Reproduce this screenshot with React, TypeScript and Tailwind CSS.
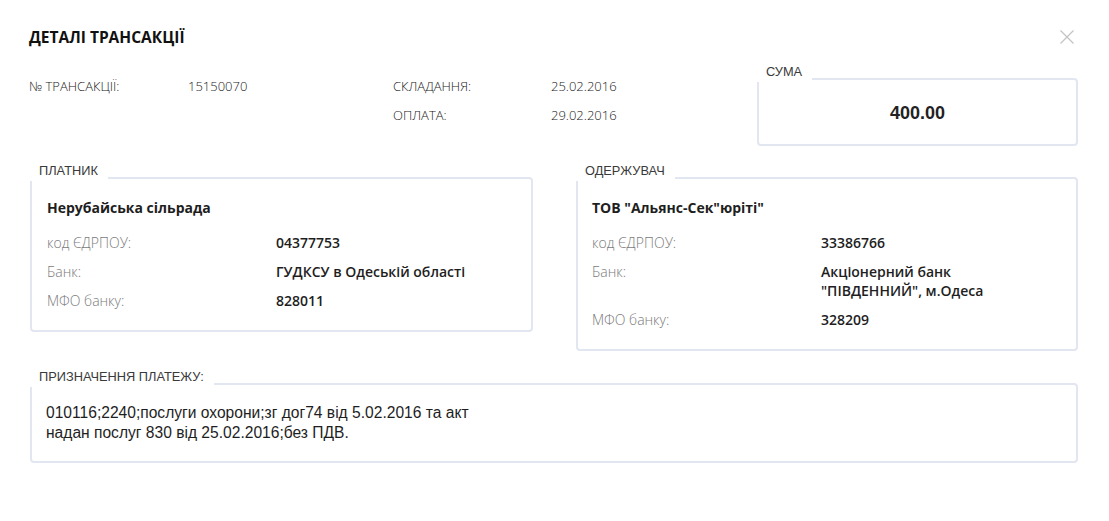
import React from "react";

const open = { fontFamily: '"Open Sans", "Noto Sans", sans-serif' };
const arial = { fontFamily: '"Liberation Sans", Arial, sans-serif' };

function Legend({ children }: { children: React.ReactNode }) {
  return (
    <div
      className="absolute left-[-8px] top-[-18px] bg-white pl-[15px] pr-[10px] text-[12.8px] leading-[20px] text-[#3a3a3a]"
      style={arial}
    >
      {children}
    </div>
  );
}

function Row({ label, value, valueCol }: { label: string; value: React.ReactNode; valueCol: string }) {
  return (
    <div className="flex py-[5px] text-[14px] leading-[19px]">
      <div className={`${valueCol} shrink-0 font-light text-[#7a7a7a]`}>{label}</div>
      <div className="font-semibold text-[#1e1e1e]">{value}</div>
    </div>
  );
}

function Party({
  legend,
  name,
  code,
  bank,
  mfo,
  valueCol,
  pl,
}: {
  legend: string;
  name: string;
  code: string;
  bank: React.ReactNode;
  mfo: string;
  valueCol: string;
  pl: string;
}) {
  return (
    <div className={`relative rounded-[4px] border-2 border-[#e1e6f0] ${pl} pt-[19px] pb-[15px]`} style={open}>
      <Legend>{legend}</Legend>
      <div className="text-[14px] font-bold leading-[20px] text-[#1e1e1e]">{name}</div>
      <div className="mt-[10px]">
        <Row label="код ЄДРПОУ:" value={code} valueCol={valueCol} />
        <Row label="Банк:" value={bank} valueCol={valueCol} />
        <Row label="МФО банку:" value={mfo} valueCol={valueCol} />
      </div>
    </div>
  );
}

export default function App() {
  return (
    <div className="min-h-[521px] w-[1109px] bg-white pl-[30px] pr-[31px]" style={open}>
      <div className="flex items-center justify-between pt-[27px]">
        <h1 className="ml-[-1px] text-[15.5px] font-bold leading-[20px] text-[#111]">ДЕТАЛІ ТРАНСАКЦІЇ</h1>
        <svg width="16" height="16" viewBox="0 0 16 16" className="mr-[3px]">
          <line x1="1.5" y1="1.5" x2="14.5" y2="14.5" stroke="#c4c4c4" strokeWidth="1.3" />
          <line x1="14.5" y1="1.5" x2="1.5" y2="14.5" stroke="#c4c4c4" strokeWidth="1.3" />
        </svg>
      </div>

      <div className="mt-[25px] flex items-start">
        <div className="w-[363px] text-[13px] font-light leading-[29px] text-[#1a1a1a]">
          <div className="flex">
            <div className="ml-[-1px] w-[159px] shrink-0">№ ТРАНСАКЦІЇ:</div>
            <div>15150070</div>
          </div>
        </div>
        <div className="text-[13px] font-light leading-[29px] text-[#1a1a1a]">
          <div className="flex">
            <div className="w-[158px] shrink-0">СКЛАДАННЯ:</div>
            <div>25.02.2016</div>
          </div>
          <div className="flex">
            <div className="w-[158px] shrink-0">ОПЛАТА:</div>
            <div>29.02.2016</div>
          </div>
        </div>
        <div className="relative ml-auto mt-[6px] flex h-[68px] w-[321px] items-center justify-center rounded-[4px] border-2 border-[#e1e6f0] pt-[3px]">
          <Legend>СУМА</Legend>
          <div className="text-[18px] font-bold text-[#222]" style={arial}>
            400.00
          </div>
        </div>
      </div>

      <div className="mt-[31px] grid grid-cols-[503px_502px] items-start gap-x-[43px]">
        <Party
          legend="ПЛАТНИК"
          name="Нерубайська сільрада"
          code="04377753"
          bank="ГУДКСУ в Одеській області"
          mfo="828011"
          valueCol="w-[229px]"
          pl="pl-[15px]"
        />
        <Party
          legend="ОДЕРЖУВАЧ"
          name={'ТОВ "Альянс-Сек"юріті"'}
          code="33386766"
          bank={
            <>
              Акціонерний банк
              <br />
              "ПІВДЕННИЙ", м.Одеса
            </>
          }
          mfo="328209"
          valueCol="w-[229px]"
          pl="pl-[14px]"
        />
      </div>

      <div className="relative mt-[32px] rounded-[4px] border-2 border-[#e1e6f0] pl-[14px] pt-[18px] pb-[18px]">
        <Legend>ПРИЗНАЧЕННЯ ПЛАТЕЖУ:</Legend>
        <div className="text-[15.6px] leading-[20px] text-[#1e1e1e]" style={arial}>
          010116;2240;послуги охорони;зг дог74 від 5.02.2016 та акт
          <br />
          надан послуг 830 від 25.02.2016;без ПДВ.
        </div>
      </div>
    </div>
  );
}
